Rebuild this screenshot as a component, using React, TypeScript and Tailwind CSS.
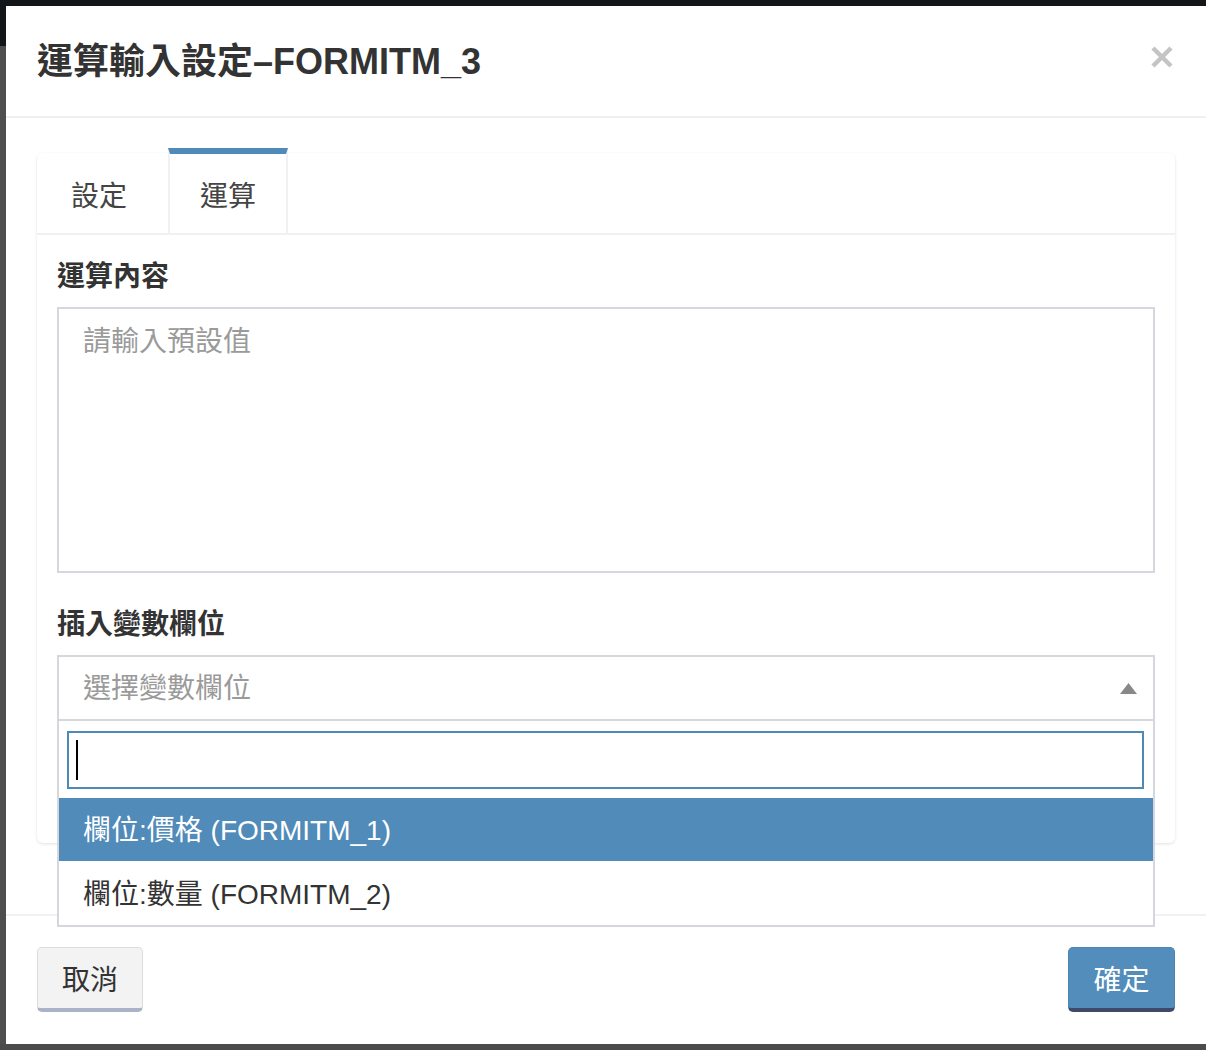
import React from 'react';

const FONT = { fontFamily: '"Liberation Sans", "Noto Sans CJK TC", sans-serif' };

const OPTIONS = [
  { id: 'FORMITM_1', label: '欄位:價格 (FORMITM_1)' },
  { id: 'FORMITM_2', label: '欄位:數量 (FORMITM_2)' },
];

const CloseIcon: React.FC = () => (
  <svg width="22" height="22" viewBox="0 0 22 22" fill="none">
    <path d="M2 2 L20 20 M20 2 L2 20" stroke="#c4c4c4" strokeWidth="4.5" strokeLinecap="butt" />
  </svg>
);

const App: React.FC = () => {
  return (
    <div className="w-[1206px] h-[1050px] flex flex-col bg-[#4b4b4b] overflow-hidden" style={FONT}>
      <div className="h-[6px] shrink-0 bg-[#121619]" />
      <div className="flex flex-1 min-h-0">
        <div className="w-[6px] shrink-0 flex flex-col">
          <div className="h-[40px] bg-[#121619]" />
          <div className="flex-1 bg-[#4e4e4e]" />
        </div>

        {/* modal */}
        <div className="flex-1 flex flex-col bg-white text-[#333]">
          {/* header */}
          <div className="h-[112px] shrink-0 flex items-center justify-between pl-[31px] pr-[33px] border-b-2 border-[#f0f0f0]">
            <h1 className="text-[36px] font-semibold leading-none mt-[2px]">運算輸入設定–FORMITM_3</h1>
            <button className="mb-[8px]"><CloseIcon /></button>
          </div>

          {/* body */}
          <div className="flex-1 px-[31px] pt-[35px]">
            <div className="h-[690px] rounded-[6px] bg-white shadow-[0_1px_3px_rgba(0,0,0,0.12)] flex flex-col">
              <div className="h-[82px] shrink-0 flex border-b-2 border-[#f1f1f1]">
                <div className="w-[131px] flex items-center pl-[34px] text-[28px] text-[#444] pt-[7px]">設定</div>
                <div className="w-[120px] -mt-[5px] flex items-center justify-center text-[28px] text-[#444] border-t-[6px] border-t-[#4f8bba] border-x-2 border-x-[#f1f1f1] bg-white pt-[6px]">
                  運算
                </div>
              </div>

              <div className="px-[20px] pt-[22px]">
                <div className="text-[28px] font-bold leading-[40px]">運算內容</div>
                <textarea
                  className="mt-[10px] block w-full h-[266px] border-2 border-[#d4d7dc] px-[24px] py-[14px] text-[28px] leading-[38px] resize-none outline-none placeholder:text-[#9a9a9a]"
                  placeholder="請輸入預設值"
                  style={FONT}
                />

                <div className="mt-[32px] text-[28px] font-bold leading-[40px]">插入變數欄位</div>

                <div className="relative mt-[10px]">
                  <div className="h-[66px] border-2 border-[#d4d7dc] flex items-center justify-between pl-[24px] pr-[16px]">
                    <span className="text-[28px] text-[#9a9a9a] pt-[2px]">選擇變數欄位</span>
                    <svg width="17" height="11" viewBox="0 0 17 11">
                      <path d="M0 11 L8.5 0 L17 11 Z" fill="#888" />
                    </svg>
                  </div>

                  {/* dropdown */}
                  <div className="absolute left-0 right-0 top-[64px] z-10 bg-white border-2 border-[#d4d7dc]">
                    <div className="pt-[10px] pb-[9px] pl-[8px] pr-[9px]">
                      <div className="h-[58px] border-2 border-[#4e88b5] flex items-center pl-[7px]">
                        <span className="block w-[2px] h-[40px] bg-black" />
                      </div>
                    </div>
                    {OPTIONS.map((opt, i) => (
                      <div
                        key={opt.id}
                        className={`flex items-center pl-[24px] pt-[3px] text-[28px] ${
                          i === 0 ? 'h-[63px] bg-[#518bb9] text-white' : 'h-[64px] text-[#333]'
                        }`}
                      >
                        {opt.label}
                      </div>
                    ))}
                  </div>
                </div>
              </div>
            </div>
          </div>

          {/* footer */}
          <div className="h-[130px] shrink-0 border-t-2 border-[#f1f1f1] flex items-start justify-between px-[31px] pt-[31px]">
            <button className="w-[106px] h-[65px] pt-[5px] rounded-[5px] bg-[#f3f3f3] border border-[#dcdcdc] border-b-[4px] border-b-[#aab3c7] text-[28px] text-[#333]" style={FONT}>
              取消
            </button>
            <button className="w-[107px] h-[65px] pt-[5px] rounded-[5px] bg-[#528dbb] border border-[#4a86b4] border-b-[4px] border-b-[#3f4a6a] text-[28px] text-white" style={FONT}>
              確定
            </button>
          </div>
        </div>
      </div>
      <div className="h-[6px] shrink-0 bg-[#4b4b4b]" />
    </div>
  );
};

export default App;
